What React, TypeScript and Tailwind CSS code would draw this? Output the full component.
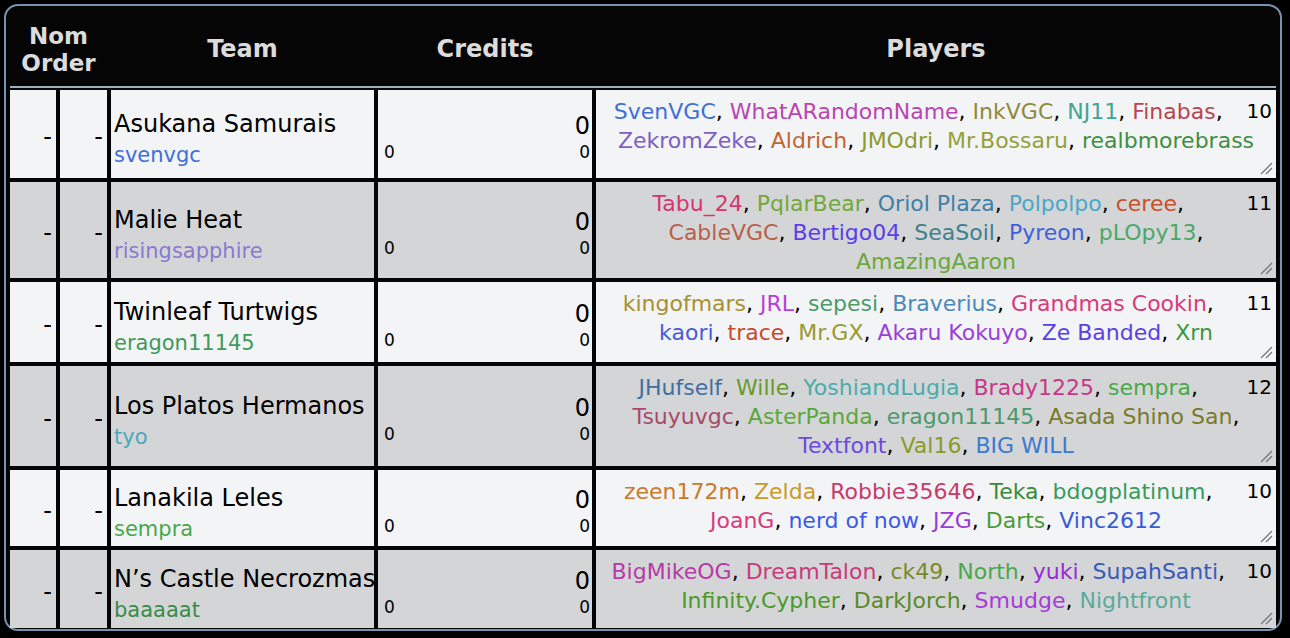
import React from 'react'

type Player = [string, string]

const teams: {
  name: string
  user: string
  userColor: string
  height: string
  count: number
  players: Player[]
}[] = [
  {
    name: 'Asukana Samurais',
    user: 'svenvgc',
    userColor: 'text-[#3f6fd8]',
    height: 'h-[88px]',
    count: 10,
    players: [
      ['SvenVGC', '#3f6fd8'],
      ['WhatARandomName', '#b846b0'],
      ['InkVGC', '#8d8a3a'],
      ['NJ11', '#3fa595'],
      ['Finabas', '#b8454f'],
      ['ZekromZeke', '#7d5fc4'],
      ['Aldrich', '#c0652f'],
      ['JMOdri', '#8e9a30'],
      ['Mr.Bossaru', '#94a03a'],
      ['realbmorebrass', '#3f8f3f'],
    ],
  },
  {
    name: 'Malie Heat',
    user: 'risingsapphire',
    userColor: 'text-[#8a7ad0]',
    height: 'h-[96px]',
    count: 11,
    players: [
      ['Tabu_24', '#d8366e'],
      ['PqlarBear', '#72a83a'],
      ['Oriol Plaza', '#3f7fa8'],
      ['Polpolpo', '#4aa8c8'],
      ['ceree', '#c8502a'],
      ['CableVGC', '#b8604a'],
      ['Bertigo04', '#5a3fe8'],
      ['SeaSoil', '#3f7f8f'],
      ['Pyreon', '#3f60d8'],
      ['pLOpy13', '#4aa86a'],
      ['AmazingAaron', '#6aa83a'],
    ],
  },
  {
    name: 'Twinleaf Turtwigs',
    user: 'eragon11145',
    userColor: 'text-[#3f9a5a]',
    height: 'h-[80px]',
    count: 11,
    players: [
      ['kingofmars', '#a89030'],
      ['JRL', '#b83fd8'],
      ['sepesi', '#4a9a6a'],
      ['Braverius', '#4a8ab8'],
      ['Grandmas Cookin', '#d83a7a'],
      ['kaori', '#4a5ad8'],
      ['trace', '#c84a2a'],
      ['Mr.GX', '#9a9a30'],
      ['Akaru Kokuyo', '#9a3fd8'],
      ['Ze Banded', '#5a3fe8'],
      ['Xrn', '#3a9a3a'],
    ],
  },
  {
    name: 'Los Platos Hermanos',
    user: 'tyo',
    userColor: 'text-[#4aa8c0]',
    height: 'h-[100px]',
    count: 12,
    players: [
      ['JHufself', '#3f6fa0'],
      ['Wille', '#6a9a2a'],
      ['YoshiandLugia', '#4aacac'],
      ['Brady1225', '#c8368a'],
      ['sempra', '#4aa84a'],
      ['Tsuyuvgc', '#a84a6a'],
      ['AsterPanda', '#5aa83a'],
      ['eragon11145', '#4a9a6a'],
      ['Asada Shino San', '#7a7a2a'],
      ['Textfont', '#6a4ae0'],
      ['Val16', '#8a9a2a'],
      ['BIG WILL', '#3a7ad0'],
    ],
  },
  {
    name: 'Lanakila Leles',
    user: 'sempra',
    userColor: 'text-[#4aa84a]',
    height: 'h-[76px]',
    count: 10,
    players: [
      ['zeen172m', '#c87a2a'],
      ['Zelda', '#c89a2a'],
      ['Robbie35646', '#c83a6a'],
      ['Teka', '#3a8a3a'],
      ['bdogplatinum', '#3a9a5a'],
      ['JoanG', '#d83a7a'],
      ['nerd of now', '#3a5ae8'],
      ['JZG', '#9a3ad8'],
      ['Darts', '#4a9a3a'],
      ['Vinc2612', '#3a5ad8'],
    ],
  },
  {
    name: 'N’s Castle Necrozmas',
    user: 'baaaaat',
    userColor: 'text-[#3a8a4a]',
    height: 'h-[78px]',
    count: 10,
    players: [
      ['BigMikeOG', '#b83aa8'],
      ['DreamTalon', '#c83a7a'],
      ['ck49', '#7a8a2a'],
      ['North', '#4aa84a'],
      ['yuki', '#9a2ad8'],
      ['SupahSanti', '#3a5ab8'],
      ['Infinity.Cypher', '#4a9a2a'],
      ['DarkJorch', '#5a8a2a'],
      ['Smudge', '#a83ad8'],
      ['Nightfront', '#5aaa9a'],
    ],
  },
]

function ResizeHandle() {
  return (
    <svg
      className="absolute right-[3px] bottom-[3px]"
      width="14"
      height="14"
      viewBox="0 0 14 14"
    >
      <line x1="2" y1="13" x2="13" y2="2" stroke="#777" strokeWidth="1.3" />
      <line x1="7" y1="13" x2="13" y2="7" stroke="#777" strokeWidth="1.3" />
    </svg>
  )
}

export default function App() {
  return (
    <div className="bg-black w-[1290px] h-[638px] pt-1 pl-1 font-['DejaVu_Sans',Verdana,sans-serif]">
      <div className="w-[1278px] border-2 border-[#7893b0] rounded-[14px] px-1 pb-px bg-[#050505]">
        {/* header */}
        <div className="grid grid-cols-[97px_4px_263px_4px_214px_4px_680px] h-[82px] text-[#dcdcdc] font-bold text-[24px] leading-[26px] border-b-2 border-[#9bb0bc]">
          <div className="flex flex-col items-center justify-center pt-[7px] text-[23px]">
            <span>Nom</span>
            <span className="mt-[1px]">Order</span>
          </div>
          <div />
          <div className="flex items-center justify-center pt-[6px]">Team</div>
          <div />
          <div className="flex items-center justify-center pt-[6px]">Credits</div>
          <div />
          <div className="flex items-center justify-center pt-[6px]">Players</div>
        </div>

        <div className="flex flex-col gap-1 pt-[2px]">
          {teams.map((t, i) => {
            const bg = i % 2 === 0 ? 'bg-[#f3f4f6]' : 'bg-[#d4d5d7]'
            return (
              <div
                key={t.name}
                className={`grid grid-cols-[46px_47px_263px_214px_680px] gap-x-1 ${t.height}`}
              >
                <div className={`${bg} flex items-center justify-end pr-1 pt-[6px] text-[24px] text-black`}>
                  -
                </div>
                <div className={`${bg} flex items-center justify-end pr-1 pt-[6px] text-[24px] text-black`}>
                  -
                </div>
                <div className={`${bg} flex flex-col justify-center pl-[3px] pt-[10px] whitespace-nowrap`}>
                  <span className="text-[24px] leading-[30px] text-black">{t.name}</span>
                  <span className={`mt-[2px] text-[21px] leading-[28px] ${t.userColor}`}>{t.user}</span>
                </div>
                <div className={`${bg} flex flex-col justify-center pl-[6px] pr-[2px] pt-[6px] text-black`}>
                  <div className="text-right text-[24px] leading-[28px]">0</div>
                  <div className="mt-[2px] flex justify-between text-[17px] leading-[20px]">
                    <span>0</span>
                    <span>0</span>
                  </div>
                </div>
                <div className={`${bg} relative px-[4px] pt-[7px] text-center text-[22px] leading-[29px]`}>
                  <span className="float-right ml-[10px] text-[20px] text-black">{t.count}</span>
                  {t.players.map(([name, color], j) => (
                    <React.Fragment key={name}>
                      <span style={{ color }}>{name}</span>
                      {j < t.players.length - 1 ? <span className="text-black">, </span> : null}
                    </React.Fragment>
                  ))}
                  <ResizeHandle />
                </div>
              </div>
            )
          })}
        </div>
      </div>
    </div>
  )
}
